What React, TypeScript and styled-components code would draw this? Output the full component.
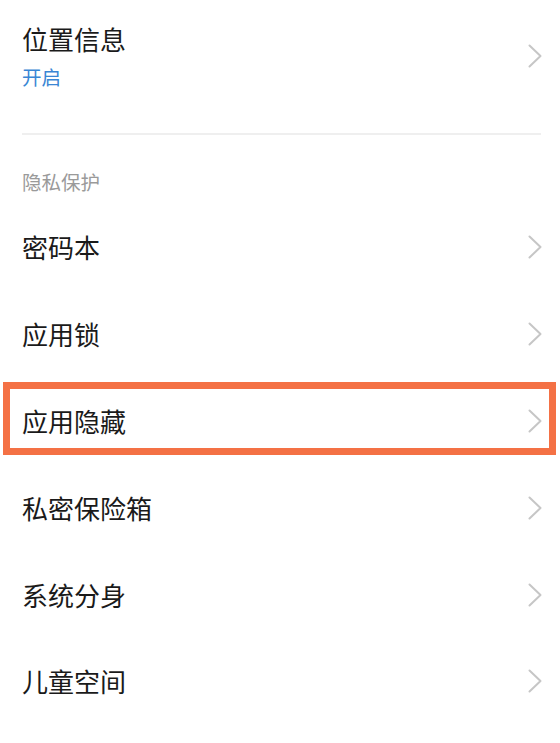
import styled, { createGlobalStyle } from "styled-components";

const GlobalStyle = createGlobalStyle`
  html, body {
    margin: 0;
    padding: 0;
    background: #ffffff;
  }
  body {
    font-family: "Noto Sans CJK SC", "Noto Sans", sans-serif;
    color: #1a1a1a;
  }
`;

const Page = styled.div`
  display: flex;
  flex-direction: column;
  width: 560px;
  height: 743px;
  overflow: hidden;
  background: #ffffff;
`;

const Item = styled.div<{ $tall?: boolean }>`
  position: relative;
  display: flex;
  align-items: center;
  justify-content: space-between;
  box-sizing: border-box;
  height: ${(p) => (p.$tall ? "112px" : "86.8px")};
  padding: 0 18px 0 22px;
`;

const Texts = styled.div`
  display: flex;
  flex-direction: column;
  gap: 10px;
`;

const Title = styled.span`
  font-size: 26px;
  line-height: 30px;
  color: #1a1a1a;
`;

const Sub = styled.span`
  font-size: 19.5px;
  line-height: 25px;
  color: #3a86d4;
`;

const Divider = styled.div`
  height: 2px;
  margin: 21px 19px 0 22px;
  background: #efefef;
`;

const SectionHeader = styled.div`
  padding: 34px 22px 10px;
  font-size: 19.5px;
  line-height: 25px;
  color: #9a9a9a;
`;

const Highlight = styled.div`
  position: absolute;
  left: 3px;
  right: 4px;
  top: 4px;
  height: 73px;
  box-sizing: border-box;
  border: 7px solid #f47145;
  pointer-events: none;
`;

const Chevron = () => (
  <svg width="14" height="24" viewBox="0 0 14 24" fill="none">
    <path
      d="M1.5 1.5 L12.5 12 L1.5 22.5"
      stroke="#c6c6c6"
      strokeWidth="2"
      strokeLinecap="round"
      strokeLinejoin="round"
    />
  </svg>
);

const rows = ["密码本", "应用锁", "应用隐藏", "私密保险箱", "系统分身", "儿童空间"];

export default function App() {
  return (
    <Page>
      <GlobalStyle />
      <Item $tall>
        <Texts>
          <Title>位置信息</Title>
          <Sub>开启</Sub>
        </Texts>
        <Chevron />
      </Item>
      <Divider />
      <SectionHeader>隐私保护</SectionHeader>
      {rows.map((label) => (
        <Item key={label}>
          <Title>{label}</Title>
          <Chevron />
          {label === "应用隐藏" && <Highlight />}
        </Item>
      ))}
    </Page>
  );
}
